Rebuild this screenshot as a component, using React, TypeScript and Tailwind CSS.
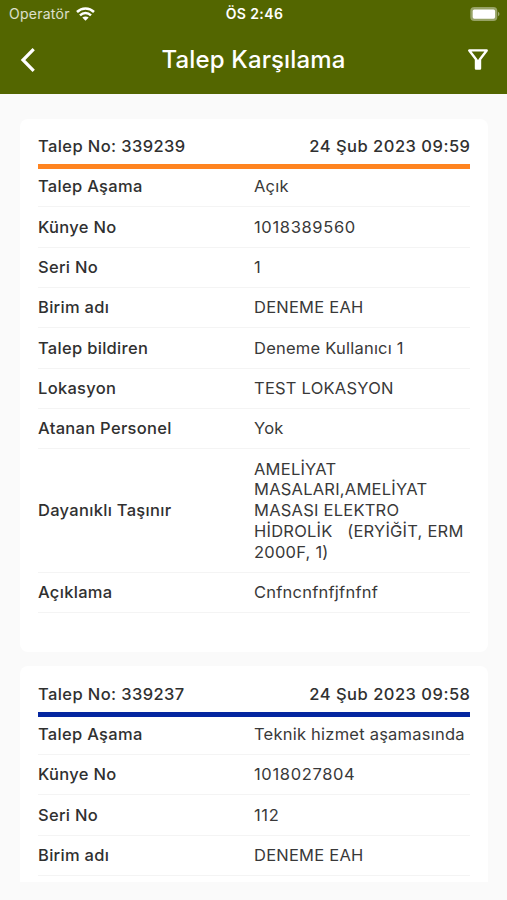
import React from 'react';
import clsx from 'clsx';

type Request = {
  no: string;
  date: string;
  bar: string;
  rows: { label: string; value: string; numeric?: boolean }[];
};

const requests: Request[] = [
  {
    no: '339239',
    date: '24 Şub 2023 09:59',
    bar: 'bg-[#ff8420]',
    rows: [
      { label: 'Talep Aşama', value: 'Açık' },
      { label: 'Künye No', value: '1018389560', numeric: true },
      { label: 'Seri No', value: '1', numeric: true },
      { label: 'Birim adı', value: 'DENEME EAH' },
      { label: 'Talep bildiren', value: 'Deneme Kullanıcı 1' },
      { label: 'Lokasyon', value: 'TEST LOKASYON' },
      { label: 'Atanan Personel', value: 'Yok' },
      {
        label: 'Dayanıklı Taşınır',
        value: 'AMELİYAT\nMASALARI,AMELİYAT\nMASASI ELEKTRO\nHİDROLİK   (ERYİĞİT, ERM\n2000F, 1)',
      },
      { label: 'Açıklama', value: 'Cnfncnfnfjfnfnf' },
    ],
  },
  {
    no: '339237',
    date: '24 Şub 2023 09:58',
    bar: 'bg-[#0426a0]',
    rows: [
      { label: 'Talep Aşama', value: 'Teknik hizmet aşamasında' },
      { label: 'Künye No', value: '1018027804', numeric: true },
      { label: 'Seri No', value: '112', numeric: true },
      { label: 'Birim adı', value: 'DENEME EAH' },
    ],
  },
];

const WifiIcon = () => (
  <svg width="19" height="14" viewBox="0 0 19 14" fill="none" stroke="white" strokeWidth="2.5">
    <path d="M1 5C5.8 .4 13.2 .4 18 5" />
    <path d="M4 8.3C7.2 5.3 11.8 5.3 15 8.3" />
    <path d="M9.5 13.8L6.3 10.6C8.2 9 10.8 9 12.7 10.6Z" fill="white" stroke="none" />
  </svg>
);

const BatteryIcon = () => (
  <svg width="30" height="14" viewBox="0 0 30 14" fill="none">
    <rect x=".3" y="0" width="27" height="14" rx="4" fill="white" fillOpacity=".4" />
    <rect x="2.7" y="2.5" width="22.4" height="9.2" rx="1.6" fill="white" />
    <path d="M28 4.8C30 5.6 30 8.4 28 9.2Z" fill="white" fillOpacity=".45" />
  </svg>
);

const RequestCard: React.FC<{ request: Request }> = ({ request }) => (
  <section className="shrink-0 rounded-lg bg-white px-[18px] pb-[39px]">
    <div className="flex h-[45.5px] items-center justify-between pt-[10px] text-[16.5px] font-medium">
      <h2 className="tracking-[0.4px]">Talep No: {request.no}</h2>
      <span className="-mr-[0.5px] tracking-[0.5px]">{request.date}</span>
    </div>
    <div className={clsx('-mb-[2px] h-[5px]', request.bar)} />
    {request.rows.map((row) => (
      <div
        key={row.label}
        className="flex items-center border-b border-[#f4f4f4] pt-[9.4px] pb-[9.15px] text-[16.5px] leading-[20.8px]"
      >
        <span className="w-1/2 font-medium tracking-[0.3px]">{row.label}</span>
        <span
          className={clsx(
            'w-1/2 whitespace-pre text-[#393939]',
            row.numeric ? 'tracking-[0.65px]' : 'tracking-[0.23px]'
          )}
        >
          {row.value}
        </span>
      </div>
    ))}
  </section>
);

export default function App() {
  return (
    <div className="flex h-[900px] w-[507px] flex-col overflow-hidden bg-[#fafafa] font-['Inter',sans-serif] text-[#303030]">
      <header className="h-[93.5px] shrink-0 bg-[#536600] text-white">
        <div className="grid h-[27px] grid-cols-3 items-center pr-[7px] pl-[9px] text-[14px]">
          <div className="flex items-center gap-[6px]">
            <span className="tracking-[0.25px] text-white/80">Operatör</span>
            <WifiIcon />
          </div>
          <span className="text-center font-semibold tracking-[0.4px]">ÖS 2:46</span>
          <div className="flex justify-end">
            <BatteryIcon />
          </div>
        </div>
        <div className="flex h-[65px] items-center justify-between pr-[19.5px] pl-[19.5px]">
          <button aria-label="Geri">
            <svg width="16" height="24" viewBox="0 0 16 24" fill="none" stroke="white" strokeWidth="3.2">
              <path d="M13.7 1.2L3 12L13.7 22.8" />
            </svg>
          </button>
          <h1 className="pt-px pl-[4px] text-[24px] font-medium tracking-[0.13px]">Talep Karşılama</h1>
          <button aria-label="Filtre">
            <svg width="20" height="21" viewBox="0 0 20 21" fill="none" stroke="white" strokeWidth="2.4" strokeLinejoin="round">
              <path d="M1.3 1.4H18.7L12 10.2V19.6H8V10.2Z" />
              <path d="M10 10.5V19" />
            </svg>
          </button>
        </div>
      </header>

      <main className="mt-[25px] mr-[19px] ml-[20px] flex h-[763.5px] flex-col gap-[14px] overflow-hidden">
        {requests.map((request) => (
          <RequestCard key={request.no} request={request} />
        ))}
      </main>
    </div>
  );
}
